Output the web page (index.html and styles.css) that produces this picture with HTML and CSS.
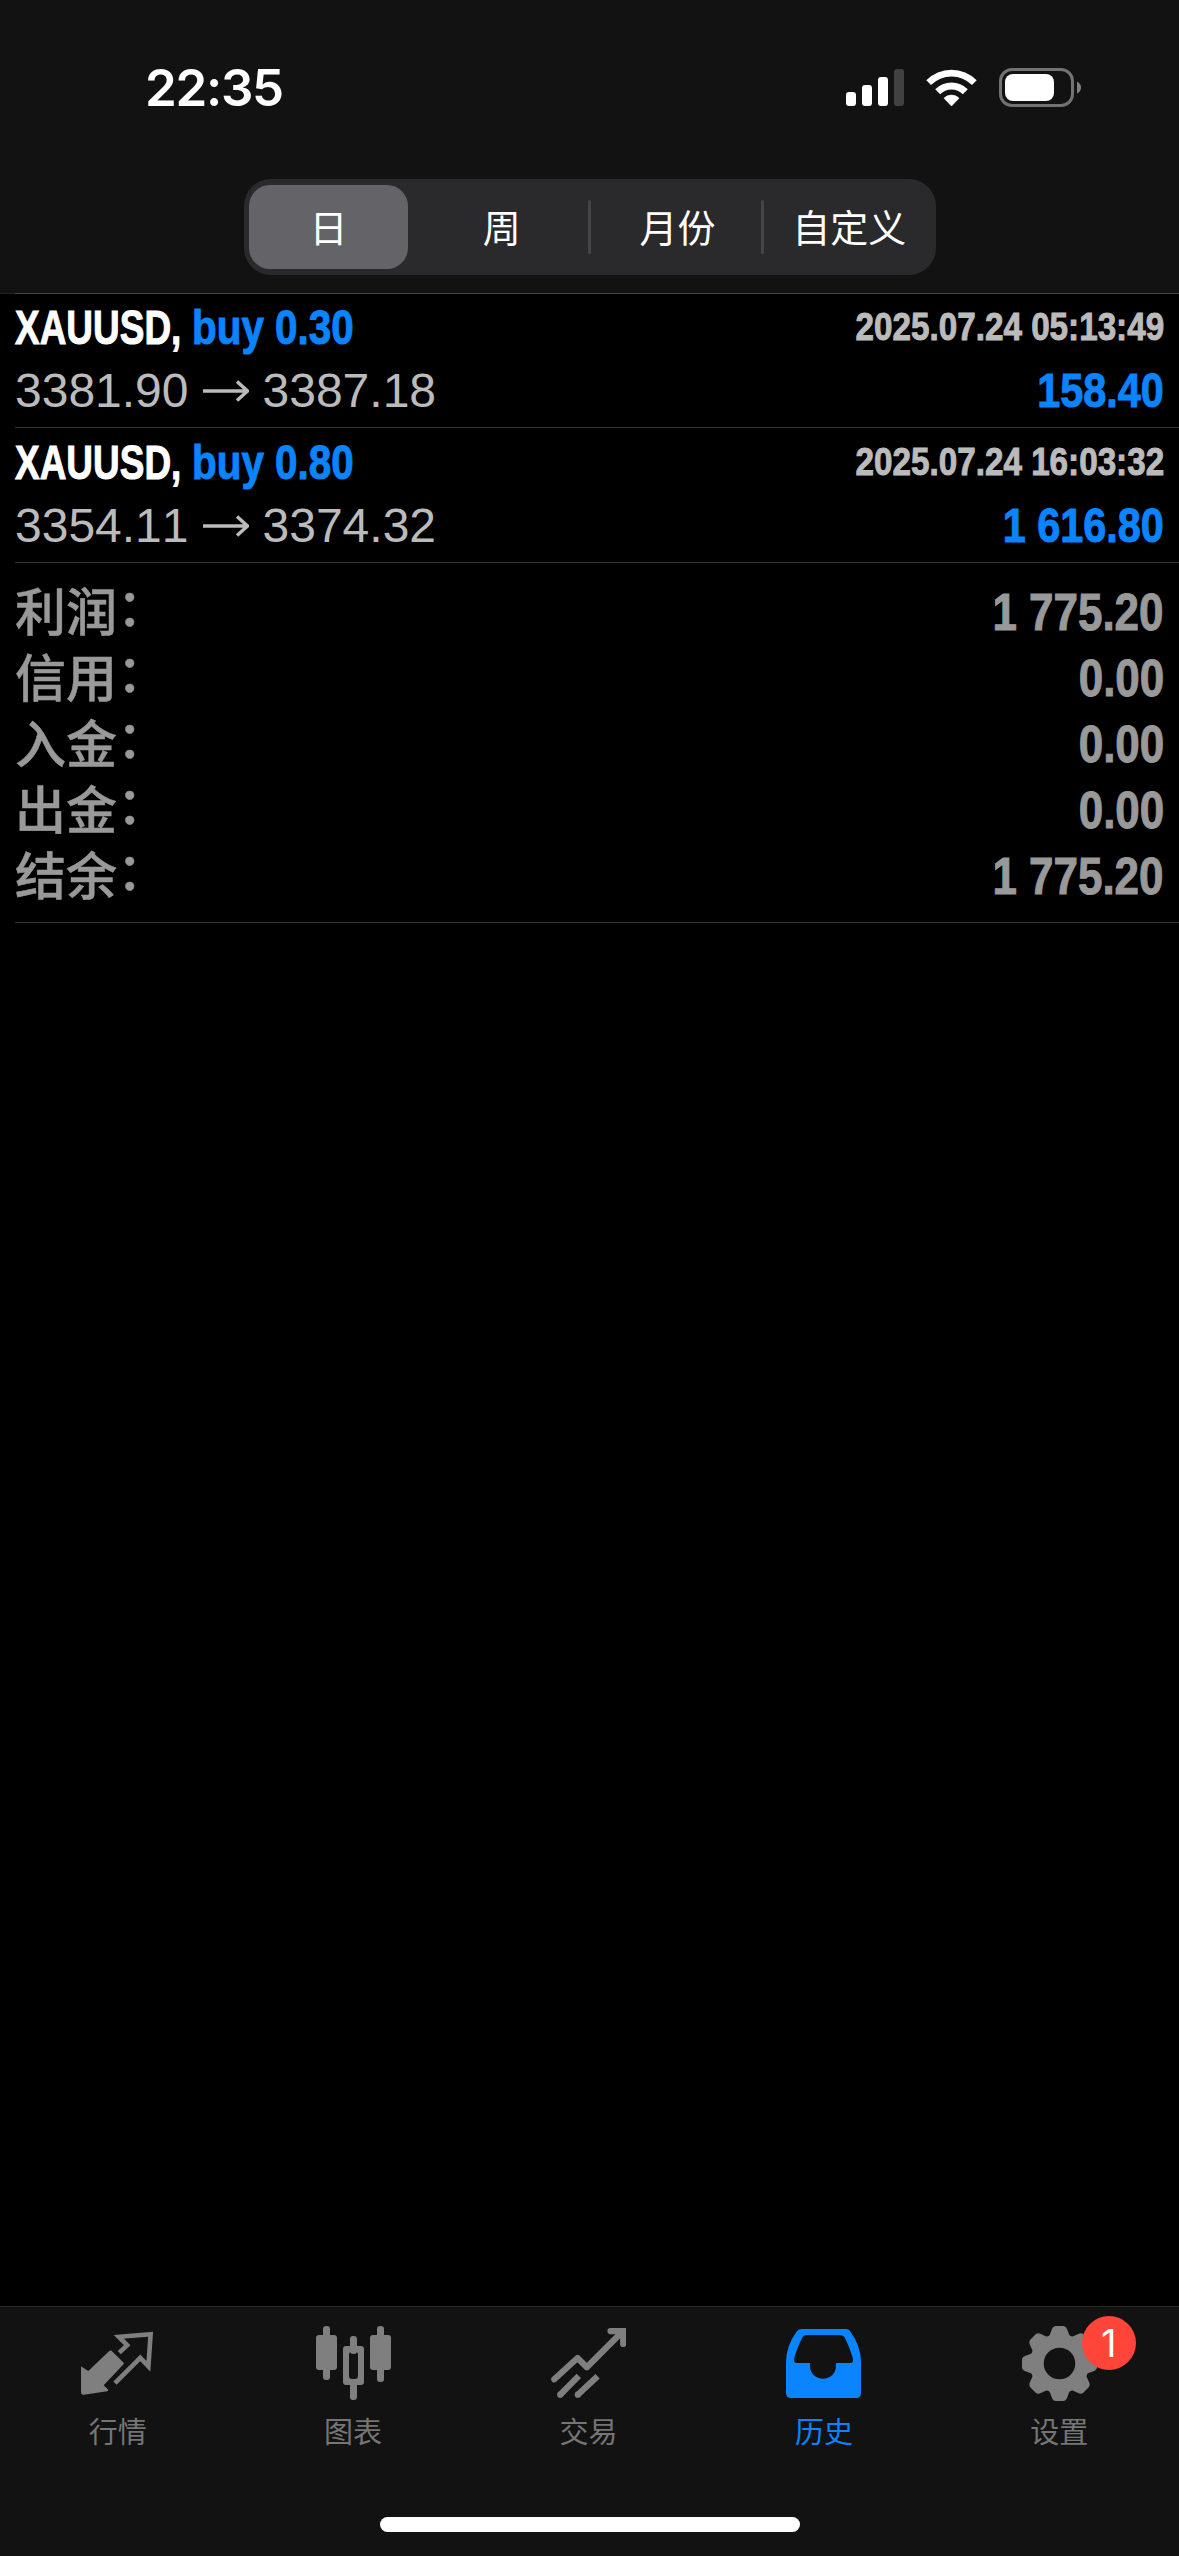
FILE: index.html
```html
<!DOCTYPE html>
<html lang="zh-CN">
<head>
    <meta charset="UTF-8">
    <meta name="viewport" content="width=device-width, initial-scale=1.0">
    <title>历史</title>
    <link rel="stylesheet" href="styles.css">
</head>
<body>
    <header>
        <div class="status-bar">
            <span class="time">22:35</span>
            <svg class="status-icons" width="236" height="40" viewBox="0 0 236 40">
                <!-- signal -->
                <rect x="0" y="24" width="10" height="14" rx="3" fill="#fff"/>
                <rect x="16" y="17" width="10" height="21" rx="3" fill="#fff"/>
                <rect x="32" y="9" width="10" height="29" rx="3" fill="#fff"/>
                <rect x="48" y="1" width="10" height="37" rx="3" fill="#414141"/>
                <!-- wifi -->
                <path d="M80.3 12.2A35.5 35.5 0 0 1 130.7 12.2L126 17A29 29 0 0 0 85 17Z" fill="#fff"/>
                <path d="M89.2 21.2A23 23 0 0 1 121.8 21.2L116.8 26.2A16 16 0 0 0 94.2 26.2Z" fill="#fff"/>
                <path d="M98 30.2A10.6 10.6 0 0 1 113 30.2L105.5 38Z" fill="#fff" stroke="#fff" stroke-width=".6" stroke-linejoin="round"/>
                <!-- battery -->
                <rect x="154.5" y="1.5" width="72" height="36" rx="11.5" fill="none" stroke="#727272" stroke-width="3"/>
                <rect x="159" y="6" width="49" height="27" rx="8" fill="#fff"/>
                <path d="M231 13.5Q235 15.5 235 19.5Q235 23.5 231 25.5Z" fill="#808080"/>
            </svg>
        </div>
        <div class="segments">
            <button class="segment active">日</button>
            <button class="segment">周</button>
            <button class="segment month">月份</button>
            <button class="segment">自定义</button>
        </div>
    </header>

    <main>
        <div class="deal">
            <div class="line">
                <div class="title"><span class="symbol">XAUUSD,</span><span class="side">buy 0.30</span></div>
                <div class="date">2025.07.24 05:13:49</div>
            </div>
            <div class="line">
                <div class="prices">
                    <span>3381.90</span>
                    <svg class="arrow" width="46" height="22" viewBox="0 0 46 22"><path d="M0 11H44M34 1.5L44.5 11L34 20.5"/></svg>
                    <span>3387.18</span>
                </div>
                <div class="profit">158.40</div>
            </div>
        </div>
        <div class="deal">
            <div class="line">
                <div class="title"><span class="symbol">XAUUSD,</span><span class="side">buy 0.80</span></div>
                <div class="date">2025.07.24 16:03:32</div>
            </div>
            <div class="line">
                <div class="prices">
                    <span>3354.11</span>
                    <svg class="arrow" width="46" height="22" viewBox="0 0 46 22"><path d="M0 11H44M34 1.5L44.5 11L34 20.5"/></svg>
                    <span>3374.32</span>
                </div>
                <div class="profit">1 616.80</div>
            </div>
        </div>
        <div class="summary">
            <div class="total"><span class="label">利润<i>：</i></span><span class="value">1 775.20</span></div>
            <div class="total"><span class="label">信用<i>：</i></span><span class="value">0.00</span></div>
            <div class="total"><span class="label">入金<i>：</i></span><span class="value">0.00</span></div>
            <div class="total"><span class="label">出金<i>：</i></span><span class="value">0.00</span></div>
            <div class="total"><span class="label">结余<i>：</i></span><span class="value">1 775.20</span></div>
        </div>
    </main>

    <footer>
        <nav class="tabs">
            <a class="tab">
                <svg width="75" height="75" viewBox="0 0 75 75">
                    <path d="M2 41L8.3 45L29.5 24.8Q30.5 24 31.5 24.8L43.5 36.4Q44.3 37.3 43.5 38.2L23.7 59.3L28 63.6Q28.8 64.8 27.3 65.2L4 68.8Q1 69 1 66V40.5Z" fill="currentColor"/>
                    <path d="M39.3 26.7L47.2 19.2L38.8 10.8L70.6 8.2L68.4 40.3L60.3 31.8L35 57.2" fill="none" stroke="currentColor" stroke-width="4.6"/>
                </svg>
                <span>行情</span>
            </a>
            <a class="tab">
                <svg width="75" height="75" viewBox="0 0 75 75" fill="currentColor">
                    <rect x="7" y="0" width="7" height="54" rx="3"/>
                    <rect x="0" y="9" width="21" height="35" rx="3"/>
                    <rect x="34" y="10" width="7" height="18" rx="3"/>
                    <rect x="34" y="55" width="7" height="19" rx="3"/>
                    <path fill-rule="evenodd" d="M30 20H45Q48 20 48 23V56Q48 59 45 59H30Q27 59 27 56V23Q27 20 30 20ZM36 25.7Q33 25.7 33 28.7V50Q33 53 36 53H39Q42 53 42 50V28.7Q42 25.7 39 25.7Z"/>
                    <rect x="61" y="0" width="7" height="56" rx="3"/>
                    <rect x="54" y="9" width="21" height="35" rx="3"/>
                </svg>
                <span>图表</span>
            </a>
            <a class="tab">
                <svg width="75" height="75" viewBox="0 0 75 75" fill="none" stroke="currentColor" stroke-width="6.2">
                    <path d="M3.3 53.3L26.5 32L35.8 41.3L71 6" stroke-linecap="round" stroke-linejoin="round"/>
                    <path d="M59.5 5.1H72.2V18" stroke-linecap="round"/>
                    <path d="M9.2 68.7L27.8 49.9M26.8 68.7L46.6 50.3"/>
                    <path d="M9.2 68.7h.1M26.8 68.7h.1" stroke-linecap="round"/>
                </svg>
                <span>交易</span>
            </a>
            <a class="tab active">
                <svg width="75" height="75" viewBox="0 0 75 75">
                    <path fill="currentColor" fill-rule="evenodd" d="M16 3H60Q62.5 3 64 5Q75 20 75 36V67Q75 72 70 72H5Q0 72 0 67V36Q0 20 11 5Q12.5 3 16 3ZM21 9Q17.5 9 16 12Q12 20 8.3 31.5Q7 37 11 37H24V40C24 47.5 30 52.7 37 52.7S50 47.5 50 40V37H64Q68.2 37 66.7 31.5Q63 20 59 12Q57.5 9 53 9Z"/>
                </svg>
                <span>历史</span>
            </a>
            <a class="tab">
                <svg width="75" height="75" viewBox="-37.5 -37.5 75 75">
                    <circle r="22.5" fill="none" stroke="currentColor" stroke-width="13.5"/>
                    <g fill="currentColor">
                        <path id="tooth" d="M-12.5 -26L-9.8 -28.5L-7.7 -34Q-6.5 -37.5 -3.5 -37.5H3.5Q6.5 -37.5 7.7 -34L9.8 -28.5L12.5 -26Z"/>
                        <use href="#tooth" transform="rotate(45)"/>
                        <use href="#tooth" transform="rotate(90)"/>
                        <use href="#tooth" transform="rotate(135)"/>
                        <use href="#tooth" transform="rotate(180)"/>
                        <use href="#tooth" transform="rotate(225)"/>
                        <use href="#tooth" transform="rotate(270)"/>
                        <use href="#tooth" transform="rotate(315)"/>
                    </g>
                </svg>
                <span>设置</span>
                <b class="badge">1</b>
            </a>
        </nav>
        <div class="home-indicator"></div>
    </footer>
</body>
</html>
```
FILE: styles.css
```css
* {
    box-sizing: border-box;
}
body {
    margin: 0;
    height: 2556px;
    display: flex;
    flex-direction: column;
    background-color: #000;
    color: #fff;
    font-family: "Liberation Sans", "Noto Sans CJK SC", sans-serif;
}
header {
    height: 294px;
    background-color: #121212;
    border-bottom: 1px solid #242424;
}
.status-bar {
    height: 179px;
    padding: 68px 97px 0 145px;
    display: flex;
    justify-content: space-between;
    align-items: flex-start;
}
.time {
    font-family: Inter, sans-serif;
    font-size: 51px;
    font-weight: 600;
    line-height: 40px;
    letter-spacing: -1.3px;
}
.segments {
    width: 692px;
    height: 96px;
    margin-left: 244px;
    padding: 6px 0 6px 5px;
    display: flex;
    border-radius: 27px;
    background-color: #2a2a2c;
}
.segment {
    width: 174px;
    padding: 0 0 3px;
    border: none;
    background: none;
    color: #fff;
    font-family: "Noto Sans CJK SC", sans-serif;
    font-size: 38px;
    line-height: 81px;
    position: relative;
}
.segment.active {
    width: 159px;
    margin-right: 7px;
    border-radius: 21px;
    background-color: #646368;
}
.segment.month {
    padding-left: 4px;
}
.segment:nth-child(n+3)::before {
    content: "";
    position: absolute;
    left: -1px;
    top: 15px;
    width: 3px;
    height: 54px;
    border-radius: 2px;
    background-color: #454547;
}
main {
    flex: 1;
    margin-top: -1px;
    padding-left: 15px;
}
.deal {
    height: 135px;
    padding: 3px 15px 0 0;
    border-bottom: 1px solid #323232;
}
.deal:first-child {
    padding-top: 2px;
    border-top: 1px solid #454545;
}
.line {
    height: 63px;
    display: flex;
    justify-content: space-between;
    align-items: center;
}
.title, .date, .profit, .value {
    font-weight: bold;
    white-space: nowrap;
    -webkit-text-stroke: 1px currentColor;
}
.title, .profit {
    font-size: 48px;
}
/* condensed bold */
.symbol, .side {
    display: inline-block;
    transform: scaleX(.77);
    transform-origin: left;
}
.symbol {
    width: 177px;
}
.side {
    transform: scaleX(.842);
}
.date, .profit, .value {
    transform: scaleX(.862);
    transform-origin: right;
}
.date {
    transform: scaleX(.852);
}
.side, .profit {
    color: #0a84ff;
}
.date {
    font-size: 39px;
    line-height: 43px;
    padding-bottom: 2px;
    color: #bbb;
}
.prices {
    display: flex;
    align-items: center;
    font-size: 48px;
    font-kerning: none;
    color: #bbb;
}
.arrow {
    margin: 0 14px;
    fill: none;
    stroke: #bbb;
    stroke-width: 3.5;
}
.summary {
    height: 360px;
    padding: 15px 15px 0 0;
    border-bottom: 1px solid #323232;
    color: #999;
}
.total {
    height: 66px;
    display: flex;
    justify-content: space-between;
    align-items: center;
    font-size: 51px;
}
.label {
    padding-top: 5px;
    font-weight: 500;
    line-height: 58px;
    -webkit-text-stroke: .5px #999;
}
.label i {
    font-style: normal;
    position: relative;
    top: -5px;
}
.value {
    padding-top: 2px;
}
footer {
    height: 250px;
    background-color: #121212;
    border-top: 1px solid #2b2b2b;
}
.tabs {
    height: 210px;
    padding: 19px 2px 0 0;
    display: flex;
}
.tab {
    flex: 1;
    display: flex;
    flex-direction: column;
    align-items: center;
    position: relative;
    color: #7f7f7f;
    font-family: "Noto Sans CJK SC", sans-serif;
    font-size: 29px;
    line-height: 40px;
}
.tab span {
    margin-top: 9px;
    color: #757575;
}
.tab.active, .tab.active span {
    color: #0a84ff;
}
.badge {
    position: absolute;
    left: 140px;
    top: -10px;
    width: 54px;
    height: 54px;
    border-radius: 50%;
    background-color: #ff453a;
    color: #fff;
    font-family: Inter, sans-serif;
    font-size: 38px;
    font-weight: 400;
    line-height: 54px;
    text-align: center;
}
.home-indicator {
    width: 420px;
    height: 15px;
    margin: 0 auto;
    border-radius: 8px;
    background-color: #fff;
}
```
